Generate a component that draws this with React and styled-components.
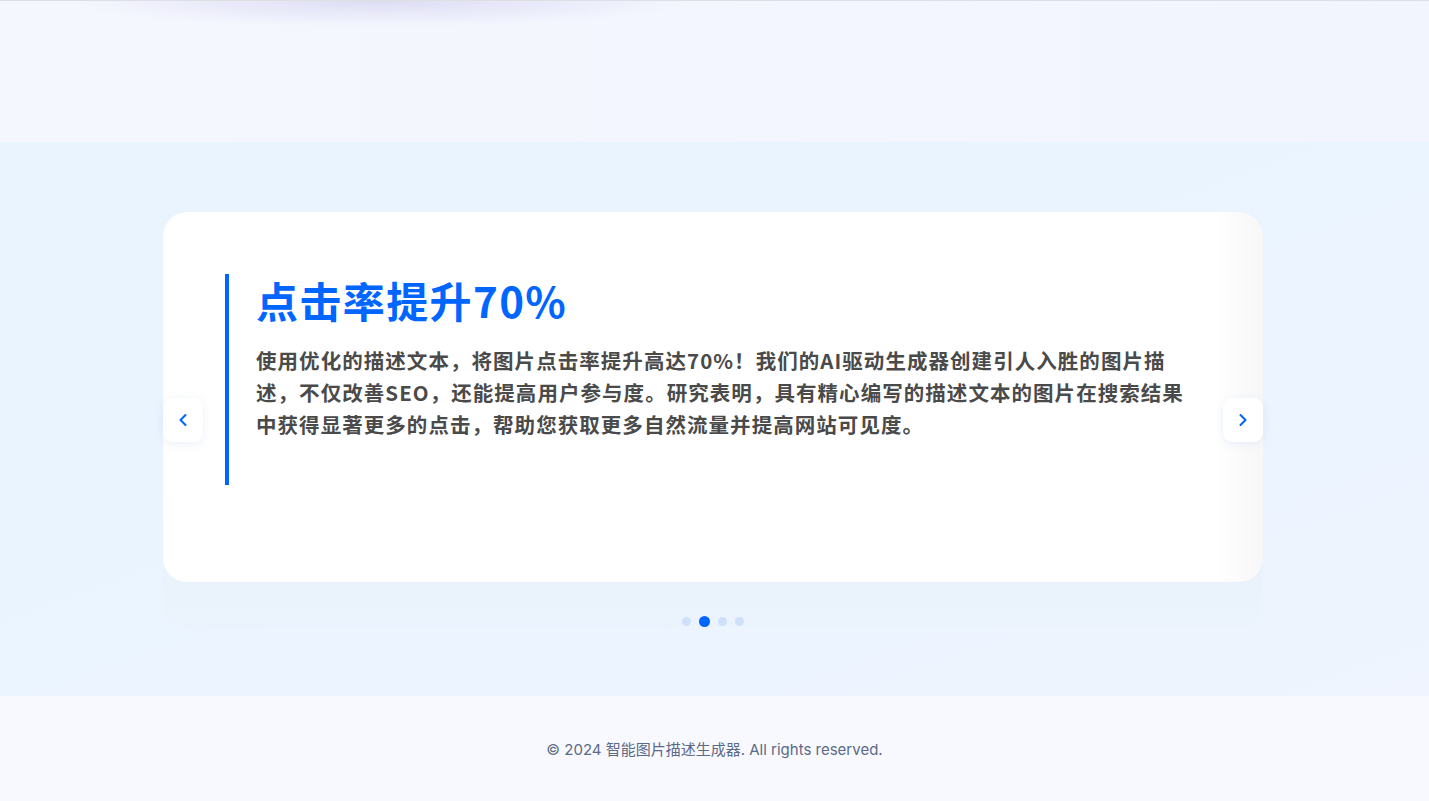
import React, { useState } from 'react'
import styled, { createGlobalStyle } from 'styled-components'
import { ChevronLeft, ChevronRight } from 'lucide-react'

const GlobalStyle = createGlobalStyle`
  * { box-sizing: border-box; }
  html, body { margin: 0; padding: 0; }
  body {
    font-family: "Inter", "Noto Sans CJK SC", sans-serif;
    background: #f8f9ff;
  }
`

const Page = styled.div`
  display: flex;
  flex-direction: column;
  min-height: 801px;
`

const TopStrip = styled.div`
  height: 142px;
  border-top: 1px solid #dedfe4;
  background:
    radial-gradient(ellipse 310px 26px at 380px 0px, rgba(214, 212, 240, 0.75), rgba(214, 212, 240, 0) 100%),
    linear-gradient(90deg, #f5f7fe 0%, #f2f5fe 100%);
`

const Showcase = styled.section`
  padding: 70px 3px 69px 0;
  display: flex;
  justify-content: center;
  background: linear-gradient(160deg, #e9f4ff 0%, #ebf4ff 60%, #eff4fe 100%);
`

const Carousel = styled.div`
  position: relative;
  width: 1100px;
  display: flex;
  flex-direction: column;
  border-radius: 24px;
  background: linear-gradient(180deg, #dde6f1 0%, #e4ecf6 45%, #ebf3fd 100%);
`

const Slide = styled.div`
  height: 370px;
  padding: 62px 62px 0;
  border-radius: 24px;
  background: linear-gradient(90deg, #ffffff calc(100% - 46px), #f7f7f8 100%);
`

const Feature = styled.div`
  min-height: 211px;
  border-left: 4px solid #0066ff;
  padding: 2px 0 0 27px;
`

const Title = styled.h2`
  margin: 0 0 20px;
  font-family: "Noto Sans CJK SC", "Inter", sans-serif;
  font-size: 42px;
  line-height: 48px;
  font-weight: 700;
  letter-spacing: 1.4px;
  color: #0066ff;
`

const Body = styled.p`
  margin: 0;
  font-family: "Noto Sans CJK SC", "Inter", sans-serif;
  font-size: 20.5px;
  line-height: 32px;
  font-weight: 700;
  letter-spacing: 1.05px;
  color: #4a4a4a;
`

const Dots = styled.div`
  height: 45px;
  display: flex;
  justify-content: center;
  align-items: center;
  gap: 8px;
  padding-top: 34px;
`

const Dot = styled.button`
  border: 0;
  padding: 0;
  width: ${(p) => (p.active ? '11px' : '9px')};
  height: ${(p) => (p.active ? '11px' : '9px')};
  border-radius: 50%;
  background: ${(p) => (p.active ? '#0066ff' : '#cfe0fb')};
  cursor: pointer;
`

const Arrow = styled.button`
  position: absolute;
  top: 50%;
  ${(p) => (p.side === 'left' ? 'left: 0;' : 'right: 0;')}
  transform: translateY(-50%);
  width: 40px;
  height: 44px;
  border: 0;
  border-radius: 9px;
  background: #ffffff;
  box-shadow: 0 2px 10px rgba(90, 130, 200, 0.12);
  color: #0066ff;
  display: flex;
  align-items: center;
  justify-content: center;
  cursor: pointer;
`

const Footer = styled.footer`
  flex: 1;
  height: 105px;
  display: flex;
  align-items: center;
  justify-content: center;
  background: #f8f9ff;
`

const Copy = styled.p`
  margin: 0 0 1px;
  font-size: 15px;
  color: #5a6a88;
`

const slides = [
  {
    title: '节省时间80%',
    text: '自动生成高质量的图片描述，告别繁琐的手动编写工作。',
  },
  {
    title: '点击率提升70%',
    text: '使用优化的描述文本，将图片点击率提升高达70%！我们的AI驱动生成器创建引人入胜的图片描述，不仅改善SEO，还能提高用户参与度。研究表明，具有精心编写的描述文本的图片在搜索结果中获得显著更多的点击，帮助您获取更多自然流量并提高网站可见度。',
  },
  {
    title: '支持多种语言',
    text: '一键生成多语言图片描述，轻松覆盖全球用户。',
  },
  {
    title: '无障碍友好',
    text: '为视障用户提供准确的替代文本，让网站更加包容。',
  },
]

export default function App() {
  const [index, setIndex] = useState(1)
  const slide = slides[index]
  const prev = () => setIndex((index + slides.length - 1) % slides.length)
  const next = () => setIndex((index + 1) % slides.length)

  return (
    <Page>
      <GlobalStyle />
      <TopStrip />
      <Showcase>
        <Carousel>
          <Slide>
            <Feature>
              <Title>{slide.title}</Title>
              <Body>{slide.text}</Body>
            </Feature>
          </Slide>
          <Dots>
            {slides.map((s, i) => (
              <Dot key={i} active={i === index} onClick={() => setIndex(i)} />
            ))}
          </Dots>
          <Arrow side="left" onClick={prev} aria-label="上一个">
            <ChevronLeft size={20} strokeWidth={2.5} />
          </Arrow>
          <Arrow side="right" onClick={next} aria-label="下一个">
            <ChevronRight size={20} strokeWidth={2.5} />
          </Arrow>
        </Carousel>
      </Showcase>
      <Footer>
        <Copy>© 2024 智能图片描述生成器. All rights reserved.</Copy>
      </Footer>
    </Page>
  )
}
